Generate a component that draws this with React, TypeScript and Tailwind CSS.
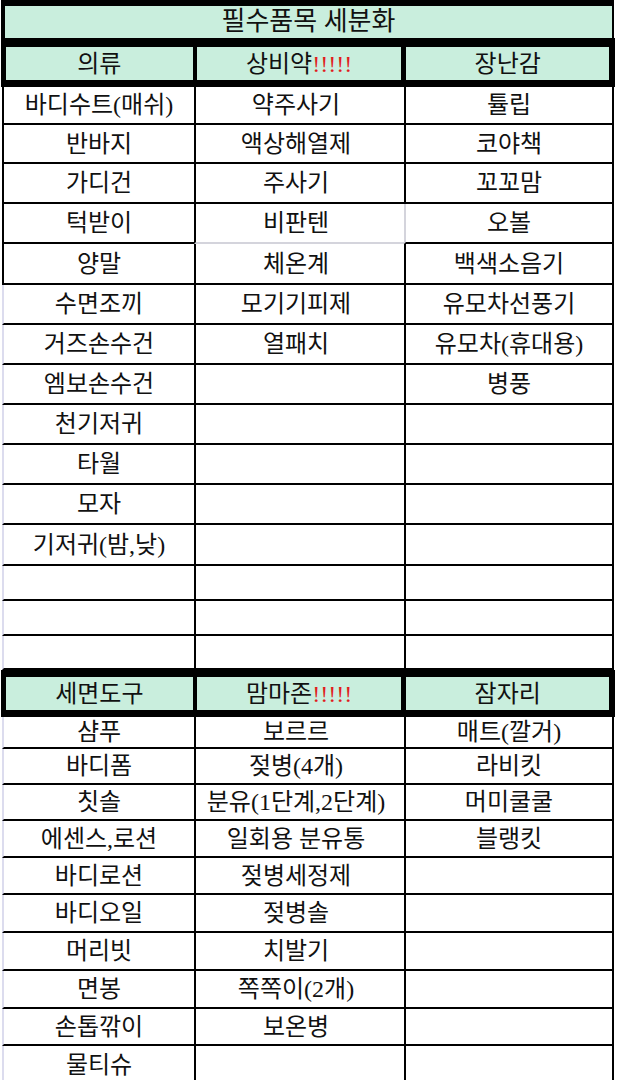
import React from 'react';

type Row = { h: number; cells: [string, string, string]; leftLine?: string; greyBottom2?: boolean; greyLeft3?: boolean };

const FONT = { fontFamily: '"Liberation Serif", "Noto Sans CJK KR", serif' };

const Bang = () => <span className="text-[#e11d1d]">!!!!!</span>;

const top: Row[] = [
  { h: 38, cells: ['바디수트(매쉬)', '약주사기', '튤립'] },
  { h: 39, cells: ['반바지', '액상해열제', '코야책'] },
  { h: 40, cells: ['가디건', '주사기', '꼬꼬맘'] },
  { h: 40, cells: ['턱받이', '비판텐', '오볼'], greyBottom2: true, greyLeft3: true },
  { h: 41, cells: ['양말', '체온계', '백색소음기'] },
  { h: 40, cells: ['수면조끼', '모기기피제', '유모차선풍기'], leftLine: 'lav' },
  { h: 40, cells: ['거즈손수건', '열패치', '유모차(휴대용)'], leftLine: 'lav' },
  { h: 40, cells: ['엠보손수건', '', '병풍'], leftLine: 'lav' },
  { h: 40, cells: ['천기저귀', '', ''], leftLine: 'lav' },
  { h: 40, cells: ['타월', '', ''], leftLine: 'lav' },
  { h: 40, cells: ['모자', '', ''], leftLine: 'lav' },
  { h: 41, cells: ['기저귀(밤,낮)', '', ''], leftLine: 'lav' },
  { h: 35, cells: ['', '', ''], leftLine: 'lav' },
  { h: 35, cells: ['', '', ''], leftLine: 'lav' },
  { h: 34, cells: ['', '', ''], leftLine: 'lav' },
];

const bottom: Row[] = [
  { h: 32, cells: ['샴푸', '보르르', '매트(깔거)'], leftLine: 'lav' },
  { h: 36, cells: ['바디폼', '젖병(4개)', '라비킷'], leftLine: 'lav' },
  { h: 36, cells: ['칫솔', '분유(1단계,2단계)', '머미쿨쿨'], leftLine: 'lav' },
  { h: 37, cells: ['에센스,로션', '일회용 분유통', '블랭킷'], leftLine: 'lav' },
  { h: 37, cells: ['바디로션', '젖병세정제', ''], leftLine: 'lav' },
  { h: 38, cells: ['바디오일', '젖병솔', ''], leftLine: 'lav' },
  { h: 38, cells: ['머리빗', '치발기', ''], leftLine: 'lav' },
  { h: 38, cells: ['면봉', '쪽쪽이(2개)', ''], leftLine: 'lav' },
  { h: 37, cells: ['손톱깎이', '보온병', ''], leftLine: 'lav' },
  { h: 40, cells: ['물티슈', '', ''], leftLine: 'lav' },
];

function DataRow({ row }: { row: Row }) {
  const [a, b, c] = row.cells;
  return (
    <div className="flex ml-[2px] w-[612px]" style={{ height: row.h }}>
      <div
        className={
          'w-[192px] border-l-2 border-b-2 border-b-black flex items-center justify-center whitespace-nowrap ' +
          (row.leftLine === 'lav' ? 'border-l-[#dcdcee]' : 'border-l-black')
        }
      >
        {a}
      </div>
      <div
        className={
          'w-[210px] border-l-2 border-l-black border-b-2 flex items-center justify-center whitespace-nowrap pr-[8px] ' +
          (row.greyBottom2 ? 'border-b-[#d4d4dc]' : 'border-b-black')
        }
      >
        {b}
      </div>
      <div
        className={
          'w-[210px] border-l-2 border-r-2 border-r-black border-b-2 border-b-black flex items-center justify-center whitespace-nowrap ' +
          (row.greyLeft3 ? 'border-l-[#d4d4dc]' : 'border-l-black')
        }
      >
        {c}
      </div>
    </div>
  );
}

function HeaderRow({ labels, pt }: { labels: React.ReactNode[]; pt: string }) {
  return (
    <div className={'flex bg-black ml-[1px] w-[614px] pb-[7px] pl-[5px] pr-[6px] gap-[4px] ' + pt}>
      <div className="w-[187px] h-[33px] bg-[#c9eedd] flex items-center justify-center">{labels[0]}</div>
      <div className="w-[205px] h-[33px] bg-[#c9eedd] flex items-center justify-center">{labels[1]}</div>
      <div className="w-[203px] h-[33px] bg-[#c9eedd] flex items-center justify-center ml-[1px]">{labels[2]}</div>
    </div>
  );
}

export default function App() {
  return (
    <div className="w-[621px] h-[1080px] overflow-hidden bg-white text-[24px] leading-none text-[#111]" style={FONT}>
      <div className="ml-[1px] w-[613px] bg-black pt-[6px] pl-[4px] pr-[2px]">
        <div className="h-[32px] bg-[#c9eedd] flex items-center justify-center text-[26px]">필수품목 세분화</div>
      </div>
      <HeaderRow
        pt="pt-[9px]"
        labels={[
          '의류',
          <span key="b">상비약<Bang /></span>,
          '장난감',
        ]}
      />
      {top.map((r, i) => (
        <DataRow key={i} row={r} />
      ))}
      <HeaderRow
        pt="pt-[7px]"
        labels={[
          '세면도구',
          <span key="m">맘마존<Bang /></span>,
          '잠자리',
        ]}
      />
      {bottom.map((r, i) => (
        <DataRow key={i} row={r} />
      ))}
    </div>
  );
}
